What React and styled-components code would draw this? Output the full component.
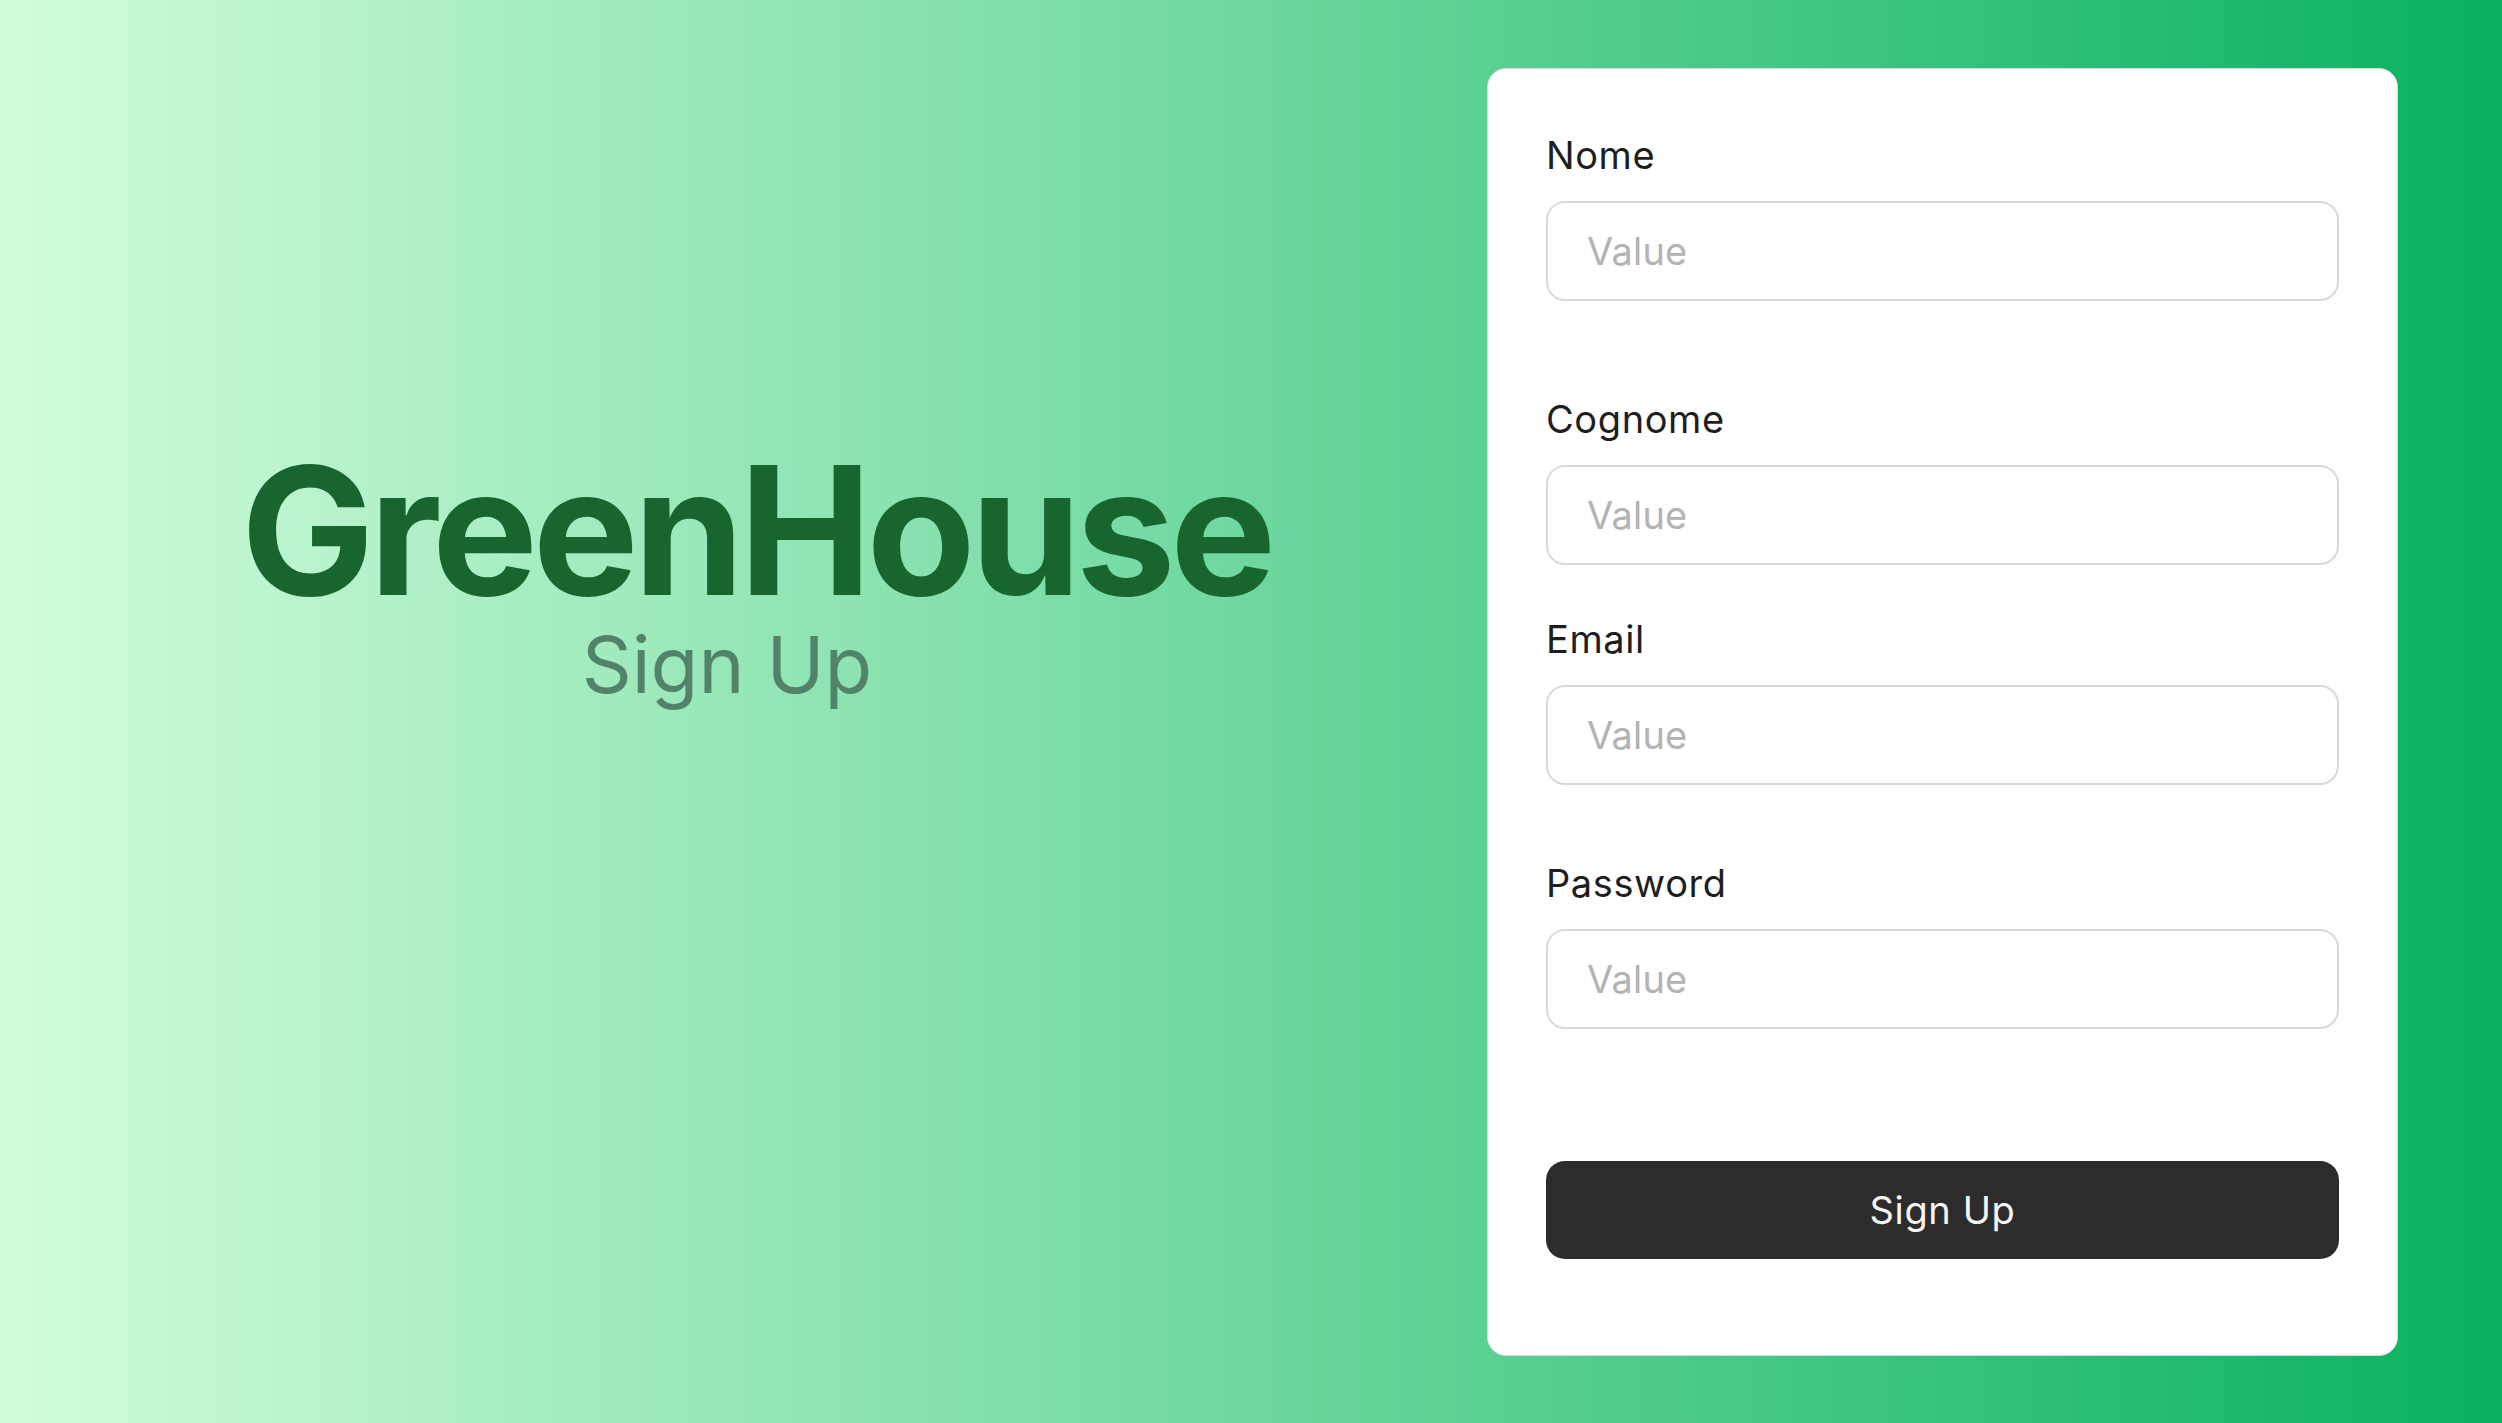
import React from "react";
import styled, { createGlobalStyle } from "styled-components";

const GlobalStyle = createGlobalStyle`
  html, body {
    margin: 0;
    padding: 0;
  }
  body {
    font-family: Inter, "Noto Sans", "Liberation Sans", sans-serif;
  }
  * { box-sizing: border-box; }
`;

const Page = styled.main`
  width: 100%;
  min-height: 100vh;
  display: flex;
  align-items: center;
  background: linear-gradient(90deg, #d1fddc 0%, #0ab161 100%);
  padding-right: 104px;
`;

const Hero = styled.section`
  flex: 1;
  align-self: stretch;
  display: flex;
  flex-direction: column;
  align-items: center;
  padding-top: 442px;
  padding-left: 25px;
`;

const Title = styled.h1`
  margin: 0;
  font-family: Inter, "Noto Sans", sans-serif;
  font-weight: 700;
  font-size: 178px;
  line-height: 1;
  letter-spacing: -0.03em;
  color: #186530;
`;

const Subtitle = styled.h2`
  margin: 6px 58px 0 0;
  font-family: Inter, "Noto Sans", sans-serif;
  font-weight: 400;
  font-size: 78px;
  line-height: 1;
  color: #52836a;
`;

const Card = styled.form`
  width: 911px;
  height: 1288px;
  flex-shrink: 0;
  background: #ffffff;
  border: 1px solid #d9d9d9;
  border-radius: 19px;
  padding: 60px 58px 0 58px;
  display: flex;
  flex-direction: column;
`;

const Field = styled.div`
  display: flex;
  flex-direction: column;
  gap: 19px;
  margin-top: ${(p) => p.$offset || 0}px;
`;

const Label = styled.label`
  font-family: Inter, "Noto Sans", sans-serif;
  font-size: 38px;
  line-height: 1.4;
  letter-spacing: 0.6px;
  color: #1e1e1e;
`;

const Input = styled.input`
  width: 100%;
  height: 100px;
  border: 2px solid #d9d9d9;
  border-radius: 19px;
  padding: 0 38px 0 39px;
  font-family: Inter, "Noto Sans", sans-serif;
  font-size: 38px;
  letter-spacing: 0.2px;
  color: #1e1e1e;
  background: #ffffff;
  outline: none;
  &::placeholder {
    color: #b3b3b3;
  }
`;

const Button = styled.button`
  margin-top: 132px;
  width: 100%;
  height: 98px;
  border: none;
  border-radius: 19px;
  background: #2c2c2c;
  color: #f5f5f5;
  font-family: Inter, "Noto Sans", sans-serif;
  font-size: 38px;
  letter-spacing: 0.6px;
  cursor: pointer;
`;

const fields = [
  { id: "nome", label: "Nome", type: "text", offset: 0 },
  { id: "cognome", label: "Cognome", type: "text", offset: 92 },
  { id: "email", label: "Email", type: "email", offset: 48 },
  { id: "password", label: "Password", type: "password", offset: 72 },
];

export default function App() {
  return (
    <>
      <GlobalStyle />
      <Page>
        <Hero>
          <Title>GreenHouse</Title>
          <Subtitle>Sign Up</Subtitle>
        </Hero>
        <Card onSubmit={(e) => e.preventDefault()}>
          {fields.map((f) => (
            <Field key={f.id} $offset={f.offset}>
              <Label htmlFor={f.id}>{f.label}</Label>
              <Input id={f.id} type={f.type} placeholder="Value" />
            </Field>
          ))}
          <Button type="submit">Sign Up</Button>
        </Card>
      </Page>
    </>
  );
}
